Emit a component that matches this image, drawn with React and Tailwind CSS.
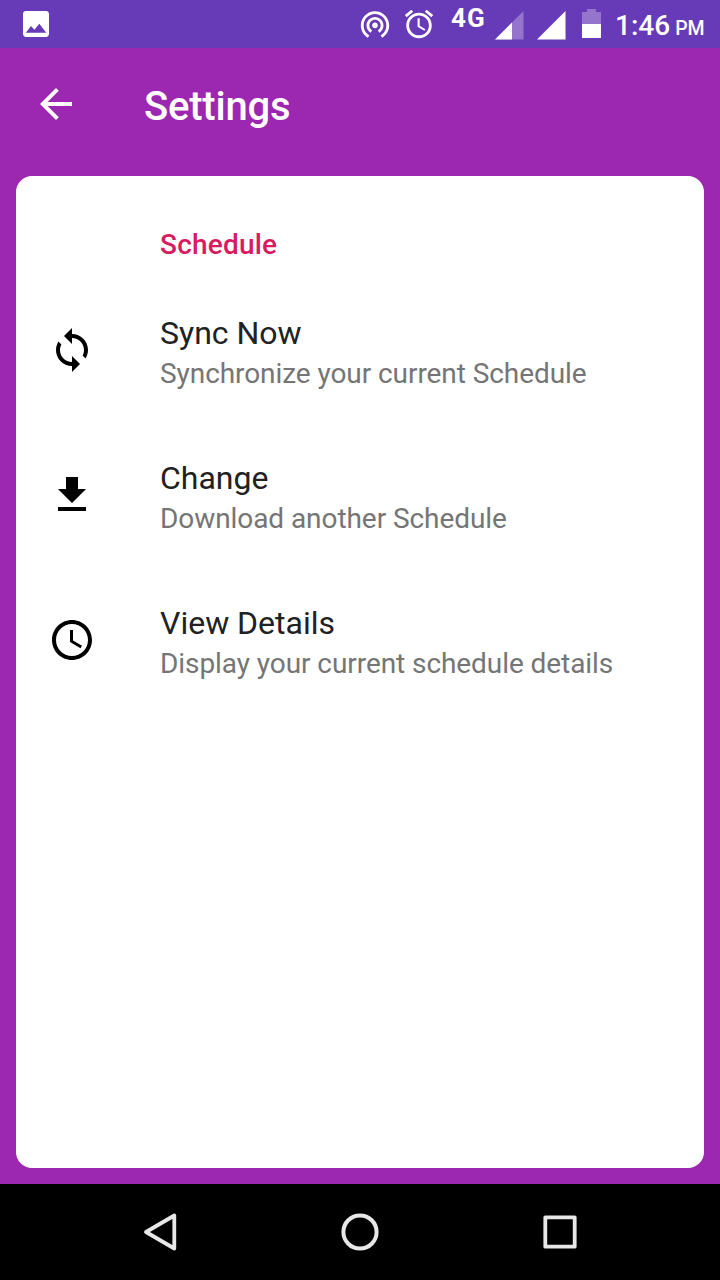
const rows = [
  {
    title: 'Sync Now',
    summary: 'Synchronize your current Schedule',
    path: 'M12 4V1L8 5l4 4V6c3.31 0 6 2.69 6 6 0 1.01-.25 1.97-.7 2.8l1.46 1.46C19.54 15.03 20 13.57 20 12c0-4.42-3.58-8-8-8zm0 14c-3.31 0-6-2.69-6-6 0-1.01.25-1.97.7-2.8L5.24 7.74C4.46 8.97 4 10.43 4 12c0 4.42 3.58 8 8 8v3l4-4-4-4v3z',
  },
  {
    title: 'Change',
    summary: 'Download another Schedule',
    path: 'M19 9h-4V3H9v6H5l7 7 7-7zM5 18v2h14v-2H5z',
  },
  {
    title: 'View Details',
    summary: 'Display your current schedule details',
    path: 'M11.99 2C6.47 2 2 6.48 2 12s4.47 10 9.99 10C17.52 22 22 17.52 22 12S17.52 2 11.99 2zM12 20c-4.42 0-8-3.58-8-8s3.58-8 8-8 8 3.58 8 8-3.58 8-8 8zm.5-13H11v6l5.25 3.15.75-1.23-4.5-2.67z',
  },
];

function StatusBar() {
  return (
    <div className="flex h-12 items-start bg-[#673ab7] text-white">
      <svg className="mt-[11px] ml-[23px] h-[26px] w-[26px]" viewBox="0 0 18 18" fill="currentColor">
        <path d="M18 16V2c0-1.100-.9-2-2-2H2C.9 0 0 .9 0 2v14c0 1.100.9 2 2 2h14c1.100 0 2-.9 2-2zM5.500 10.300l2.400 2.700L11.300 8.800l4.800 6.200H2l3.500-4.700z" />
      </svg>
      <svg className="mt-[7px] ml-[309px] h-[34px] w-[34px]" viewBox="0 0 24 24" fill="currentColor">
        <path d="M12 11c-1.100 0-2 .9-2 2s.9 2 2 2 2-.9 2-2-.9-2-2-2zm6 2c0-3.310-2.690-6-6-6s-6 2.690-6 6c0 2.220 1.210 4.150 3 5.190l1-1.740c-1.190-.7-2-1.970-2-3.450 0-2.210 1.790-4 4-4s4 1.790 4 4c0 1.480-.81 2.750-2 3.450l1 1.740c1.790-1.040 3-2.970 3-5.190zM12 3C6.480 3 2 7.480 2 13c0 3.700 2.010 6.920 4.990 8.650l1-1.730C5.610 18.530 4 15.960 4 13c0-4.420 3.580-8 8-8s8 3.580 8 8c0 2.960-1.610 5.530-4 6.920l1 1.730c2.990-1.730 5-4.950 5-8.650 0-5.520-4.480-10-10-10z" />
      </svg>
      <svg className="mt-[7px] ml-[10px] h-[34px] w-[34px]" viewBox="0 0 24 24" fill="currentColor">
        <path d="M22 5.720l-4.600-3.860-1.290 1.530 4.600 3.860L22 5.720zM7.880 3.390L6.600 1.860 2 5.710l1.290 1.530 4.590-3.850zM12.500 8H11v6l4.750 2.850.75-1.230-4-2.370V8zM12 4c-4.970 0-9 4.030-9 9s4.020 9 9 9c4.970 0 9-4.030 9-9s-4.030-9-9-9zm0 16c-3.870 0-7-3.130-7-7s3.130-7 7-7 7 3.130 7 7-3.130 7-7 7z" />
      </svg>
      <span className="mt-[5px] ml-[15px] w-[44px] text-[26px] leading-[26px] font-bold tracking-[1px]">4G</span>
      <svg className="mt-[11px] h-[29px] w-[29px]" viewBox="0 0 29 29" fill="currentColor">
        <path d="M0 28.500L28.500 0V28.500z" opacity="0.3" />
        <path d="M0 28.500L17 11.500V28.500z" />
      </svg>
      <svg className="mt-[11px] ml-[13px] h-[29px] w-[29px]" viewBox="0 0 29 29" fill="currentColor">
        <path d="M0 28.500L28.500 0V28.500z" />
      </svg>
      <svg className="mt-[9px] ml-[16px] h-[29px] w-[19px]" viewBox="0 0 19 29" fill="currentColor">
        <path d="M5 0H14V3H19V15H0V3H5z" opacity="0.3" />
        <path d="M0 15H19V29H0z" />
      </svg>
      <div className="mt-[9px] ml-[14px] text-[28px] leading-[34px] font-medium whitespace-nowrap">
        1:46<span className="ml-[5px] text-[19.5px]">PM</span>
      </div>
    </div>
  );
}

function Row({ title, summary, path }) {
  return (
    <li className="flex h-[145px] items-center pl-8">
      <svg className="mr-16 h-12 w-12 shrink-0 text-black" viewBox="0 0 24 24" fill="currentColor">
        <path d={path} />
      </svg>
      <div className="pt-[5px]">
        <h3 className="text-[32px] leading-[42px] text-[#212121]">{title}</h3>
        <p className="text-[28px] leading-[39px] tracking-[-0.07px] text-[#757575]">{summary}</p>
      </div>
    </li>
  );
}

export default function App() {
  return (
    <div className="flex h-[1280px] w-[720px] flex-col overflow-hidden bg-[#9c27b0] font-['Roboto',sans-serif]">
      <StatusBar />
      <header className="flex h-32 items-center pb-4 pl-8 text-white">
        <svg className="h-12 w-12" viewBox="0 0 24 24" fill="currentColor">
          <path d="M20 11H7.800l5.600-5.600L12 4l-8 8 8 8 1.400-1.400L7.800 13H20z" />
        </svg>
        <h1 className="mt-1.5 ml-16 text-[40px] leading-[48px] font-medium tracking-[-0.2px]">Settings</h1>
      </header>
      <main className="mx-4 mb-4 flex-1 rounded-2xl bg-white">
        <h2 className="mt-[51px] ml-36 text-[28px] leading-9 font-medium tracking-[0.2px] text-[#d81b60]">Schedule</h2>
        <ul className="mt-[14px]">
          {rows.map((row) => (
            <Row key={row.title} {...row} />
          ))}
        </ul>
      </main>
      <nav className="flex h-24 items-center justify-center gap-[152px] bg-black text-[#e8e8e8]">
        <svg className="h-12 w-12" viewBox="0 0 48 48" fill="none" stroke="currentColor" strokeWidth="3.8" strokeLinejoin="round">
          <path d="M10 24L38.300 7.500V40.500z" />
        </svg>
        <svg className="h-12 w-12" viewBox="0 0 48 48" fill="none" stroke="currentColor" strokeWidth="4">
          <circle cx="24" cy="24" r="16.600" />
        </svg>
        <svg className="h-12 w-12" viewBox="0 0 48 48" fill="none" stroke="currentColor" strokeWidth="3.8" strokeLinejoin="round">
          <path d="M9.300 9.300H38.700V38.700H9.300z" />
        </svg>
      </nav>
    </div>
  );
}
